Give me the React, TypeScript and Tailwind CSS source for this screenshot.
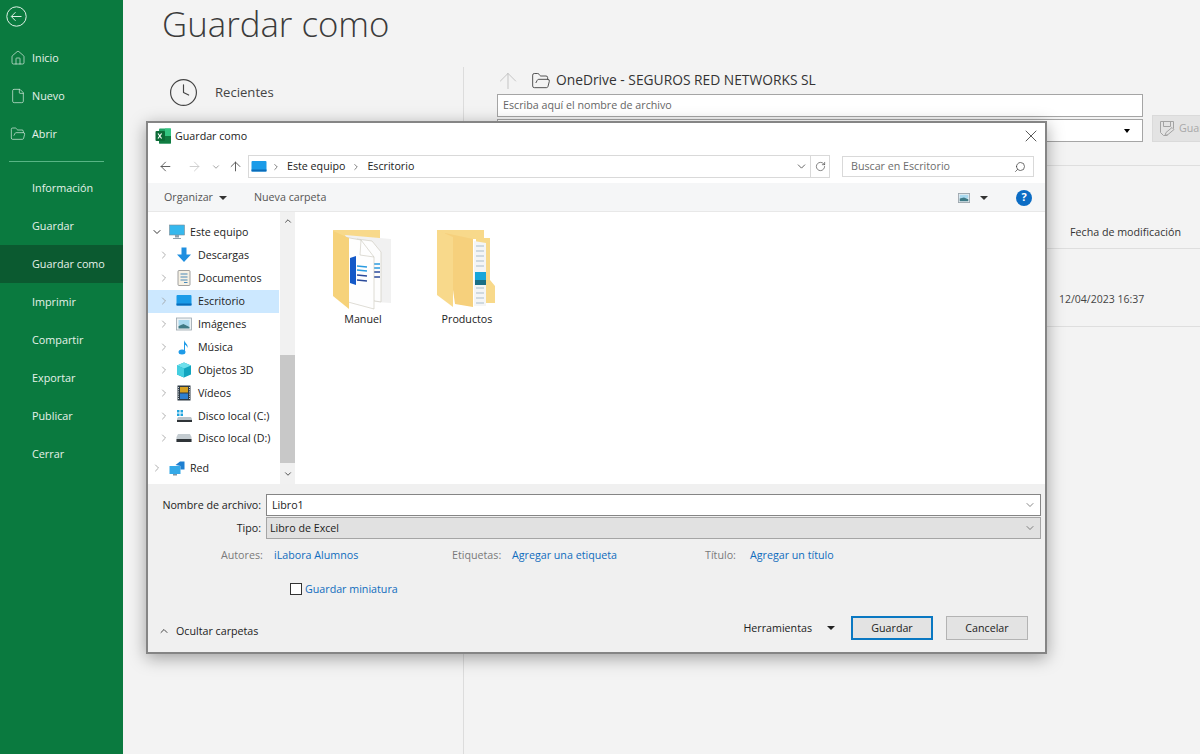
import React from "react";
import { House, File, FolderOpen, ArrowLeft, ArrowRight, ArrowUp, ChevronDown, ChevronRight, ChevronUp, RotateCw, Search, X, Clock } from "lucide-react";

const font = { fontFamily: '"Open Sans","Noto Sans",sans-serif' };

function NavItem({ label, active, icon }: { label: string; active?: boolean; icon?: React.ReactNode }) {
  return (
    <div className={`h-[38px] flex items-center text-[10.8px] text-[#e6f2ea] ${active ? "bg-[#0b5a30]" : ""}`}>
      <div className="w-8 flex justify-center pl-[3px] shrink-0">{icon}</div>
      <span>{label}</span>
    </div>
  );
}

function Sidebar() {
  return (
    <aside className="w-[123px] h-full bg-[#0a7a3f] shrink-0 flex flex-col">
      <div className="h-[39px] pl-[6px] pt-[6px]">
        <svg width="21" height="21" viewBox="0 0 21 21" fill="none" stroke="#dff1e6" strokeWidth="1"><circle cx="10.5" cy="10.5" r="9.7" /><path d="M15.5 10.5H5.5M9.5 6.2l-4.2 4.3 4.2 4.3" /></svg>
      </div>
      <NavItem label="Inicio" icon={<House size={16} strokeWidth={1} />} />
      <NavItem label="Nuevo" icon={<File size={16} strokeWidth={1} />} />
      <NavItem label="Abrir" icon={<FolderOpen size={16} strokeWidth={1} />} />
      <div className="mx-[9px] mt-[8px] mb-[7px] h-px bg-[#58b585] w-[95px]" />
      <NavItem label="Información" />
      <NavItem label="Guardar" />
      <NavItem label="Guardar como" active />
      <NavItem label="Imprimir" />
      <NavItem label="Compartir" />
      <NavItem label="Exportar" />
      <NavItem label="Publicar" />
      <NavItem label="Cerrar" />
    </aside>
  );
}

function Background() {
  return (
    <main className="flex-1 min-w-0 h-full bg-[#f3f3f3] overflow-hidden">
      <h1 className="pl-[39px] h-[67px] text-[34.8px] leading-[48px] font-light text-[#3b3b3b]">Guardar como</h1>
      <div className="flex h-[687px]">
        <div className="w-[340px] shrink-0 pl-[46px] pt-[10px]">
          <div className="flex items-center gap-[16px] text-[#444] text-[13.1px]">
            <Clock size={31} strokeWidth={0.9} className="-ml-[1px]" />
            <span>Recientes</span>
          </div>
        </div>
        <div className="flex-1 min-w-0 border-l border-[#dcdcdc] pl-[33px] overflow-hidden">
          <div className="h-[27px] flex items-center text-[#333] text-[13.8px]">
            <ArrowUp size={26} strokeWidth={0.8} className="text-[#bdbdbd] -ml-[2px] mr-[10px]" />
            <FolderOpen size={20} strokeWidth={1} className="mr-[5px]" />
            <span>OneDrive - SEGUROS RED NETWORKS SL</span>
          </div>
          <div className="w-[646px] h-[23px] bg-white border border-[#a5a5a5] text-[10.7px] text-[#666] pl-[5px] flex items-center">Escriba aquí el nombre de archivo</div>
          <div className="flex gap-[9px] mt-[2px] w-[760px] h-[23px] items-end">
            <div className="w-[646px] h-[23px] shrink-0 bg-white border border-[#a5a5a5] flex items-center justify-end pr-[12px]">
              <span className="w-0 h-0 border-x-[3.5px] border-x-transparent border-t-[4px] border-t-black" />
            </div>
            <div className="w-[100px] h-[27px] shrink-0 bg-[#e3e3e3] border border-[#dadada] flex items-center pl-[6px] gap-[3px] text-[10.7px] text-[#a8a8a8]">
              <svg width="17" height="17" viewBox="0 0 17 17" fill="none" stroke="#a3a3a3"><path d="M1.5 1.5h13v7M1.5 1.5v11l3 3h4M4.5 1.5v5h7v-5M6 15.5l1-3 6-5 2 2-6 5z" /></svg>
              <span>Guardar</span>
            </div>
          </div>
          <div className="mt-[23px] h-px bg-[#dedede] w-[760px]" />
          <div className="h-[82px] flex items-end pl-[573px] pb-[8px] text-[10.7px] text-[#333] whitespace-nowrap">
            <span>Fecha de modificación</span>
          </div>
          <div className="h-px bg-[#dedede] w-[760px]" />
          <div className="h-[77px] flex items-center pl-[562px] pt-[24px] text-[10.5px] text-[#444] whitespace-nowrap">
            <span>12/04/2023 16:37</span>
          </div>
          <div className="h-px bg-[#dedede] w-[760px]" />
        </div>
      </div>
    </main>
  );
}

function ExcelIcon() {
  return (
    <svg width="16" height="16" viewBox="0 0 16 16">
      <rect x="4" y="0.5" width="12" height="15" rx="1" fill="#21a366" />
      <rect x="10" y="0.5" width="6" height="7.5" fill="#33c481" />
      <rect x="4" y="8" width="12" height="7.5" fill="#107c41" />
      <rect x="0.5" y="3" width="9.5" height="10" rx="1" fill="#0c6b37" />
      <path d="M3 5.5l3.6 5M6.6 5.5l-3.6 5" stroke="#fff" strokeWidth="1.2" />
    </svg>
  );
}

const Caret = ({ c = "border-t-[#333]" }: { c?: string }) => (
  <span className={`inline-block w-0 h-0 border-x-[4px] border-x-transparent border-t-[4px] ${c}`} />
);

const MonitorBlue = () => (
  <svg width="16" height="14" viewBox="0 0 16 14"><rect x="0.5" y="1" width="15" height="10.5" rx="1" fill="#1a9be8" /><path d="M0.5 9.5h15v2h-15z" fill="#0a6bb8" /></svg>
);

const icons: Record<string, React.ReactNode> = {
  equipo: <svg width="16" height="16" viewBox="0 0 16 16"><rect x="0.5" y="1" width="15" height="10" fill="#35b8ee" stroke="#7c8a94" strokeWidth="0.6" /><path d="M6 11h4v2.5H6zM4 14h8v1H4z" fill="#8ea0ad" /></svg>,
  descargas: <svg width="16" height="16" viewBox="0 0 16 16"><path d="M5.5 0.5h5v7h4.5L8 15 1 7.5h4.5z" fill="#1f8fe0" /></svg>,
  documentos: <svg width="14" height="16" viewBox="0 0 14 16"><rect x="1" y="0.5" width="12" height="15" rx="1" fill="#f6f1e4" stroke="#8a8a8a" strokeWidth="0.8" /><path d="M3.5 4h7M3.5 7h7M3.5 10h7M7 12.5h3.5" stroke="#4a89b8" strokeWidth="1" /></svg>,
  escritorio: <MonitorBlue />,
  imagenes: <svg width="16" height="14" viewBox="0 0 16 14"><rect x="0.5" y="1" width="15" height="12" fill="#eef2f4" stroke="#9aa5ad" strokeWidth="0.8" /><path d="M2.5 3h11v7l-5-2.5-6 1z" fill="#a9d9ef" /><path d="M2.5 9l5-2 6 3v1.5h-11z" fill="#3e7a86" /></svg>,
  musica: <svg width="16" height="16" viewBox="0 0 16 16"><ellipse cx="6" cy="13" rx="3.5" ry="2.5" fill="#1e9be8" /><path d="M8 13V1c.6 3 4.5 4 3.5 8-.3-2-2-3-2.5-3.2V13z" fill="#1e9be8" /></svg>,
  objetos: <svg width="16" height="16" viewBox="0 0 16 16"><path d="M8 0.5l7 3v9l-7 3-7-3v-9z" fill="#12a5bf" /><path d="M1 3.5l7 3 7-3-7-3z" fill="#6fe0ec" /><path d="M1 3.5l7 3v9l-7-3z" fill="#45cfe0" /></svg>,
  videos: <svg width="14" height="16" viewBox="0 0 14 16"><rect x="0.5" y="0.5" width="13" height="15" fill="#2e3a44" /><rect x="3" y="2" width="8" height="5.5" fill="#d5a021" /><rect x="3" y="8.5" width="8" height="5.5" fill="#2e7fd0" /><path d="M1.5 2v12M12.5 2v12" stroke="#cfd6dc" strokeDasharray="1 1.2" /></svg>,
  c: <svg width="16" height="14" viewBox="0 0 16 14"><path d="M1 1h2.5v2.5H1zM4.5 1H7v2.5H4.5zM1 4.5h2.5V7H1zM4.5 4.5H7V7H4.5z" fill="#20a4dd" /><path d="M2 8h13l1 2v3H1v-3z" fill="#b9c2c8" /><rect x="1" y="11" width="15" height="2" fill="#2f3438" /></svg>,
  d: <svg width="16" height="10" viewBox="0 0 16 10"><path d="M2 1h12l1.5 3v5H0.5V4z" fill="#c4ccd1" /><rect x="0.5" y="6" width="15" height="3" fill="#2f3438" /></svg>,
  red: <svg width="16" height="15" viewBox="0 0 16 15"><rect x="0.5" y="5" width="11" height="8" fill="#34a9e8" /><path d="M4 13h4v1.5H4z" fill="#7d93a3" /><path d="M6.5 4L11 .5h4.5v8h-4V5z" fill="#1d7fd1" /></svg>,
};

function TreeRow({ label, icon, sel, top, open, mt }: { label: string; icon: string; sel?: boolean; top?: boolean; open?: boolean; mt?: string }) {
  return (
    <div className={`h-[22.9px] flex items-center text-[10.7px] text-[#222] ${sel ? "bg-[#cce8ff]" : ""} ${mt ?? ""}`}>
      <div className={`flex items-center shrink-0 ${top ? "pl-[3px]" : "pl-[10px]"}`}>
        {open ? <ChevronDown size={12} strokeWidth={2} className="text-[#333]" /> : <ChevronRight size={12} strokeWidth={1.6} className="text-[#999]" />}
      </div>
      <div className={`flex justify-center shrink-0 ${top ? "w-[27px]" : "w-[28px]"}`}>{icons[icon]}</div>
      <span className="whitespace-nowrap">{label}</span>
    </div>
  );
}

function FolderManuel() {
  return (
    <svg width="60" height="80" viewBox="0 0 60 80">
      <path d="M0 0h47v9H0z" fill="#f8d98b" />
      <path d="M12 5l46 4v64l-16-1z" fill="#f1f1f1" />
      <path d="M24 9l15 2 9 11v50l-24-4z" fill="#fdfdfd" stroke="#c9c6bb" strokeWidth="0.6" />
      <path d="M41 34h6M41 38h6" stroke="#2b9be0" strokeWidth="1.3" />
      <path d="M41 42h6M41 47h6" stroke="#2a4a9a" strokeWidth="1.3" />
      <path d="M11 7l17 3 13 17v52l-26-7z" fill="#fefefe" stroke="#c9c6bb" strokeWidth="0.6" />
      <path d="M28 10l-1 15 14 2" fill="none" stroke="#c9c6bb" strokeWidth="0.6" />
      <path d="M17 28l6-2v29l-6-2z" fill="#1459c8" />
      <path d="M24 36l10 1M24 40l10 1" stroke="#2b9be0" strokeWidth="1.3" />
      <path d="M24 45l10 1M24 50l10 1" stroke="#2a4a9a" strokeWidth="1.3" />
      <path d="M0 1l16 7v71L0 66z" fill="#f6d27a" />
    </svg>
  );
}

function FolderProductos() {
  return (
    <svg width="60" height="80" viewBox="0 0 60 80">
      <path d="M0 0h47v9H0z" fill="#f8d98b" />
      <path d="M39 8h14v42l5 6v17H39z" fill="#f8d98a" />
      <path d="M37 11l12 2v63H37z" fill="#f4f5f6" />
      <path d="M39 16h8M39 21h8M39 26h8M39 31h8M39 36h8M39 58h8M39 63h8M39 68h8M39 73h8" stroke="#a9bdca" strokeWidth="1.2" />
      <rect x="38" y="42" width="11" height="8" fill="#17a6da" />
      <rect x="38" y="50" width="11" height="5" fill="#1b6f86" />
      <path d="M8 3l28 6v68l-18-3z" fill="#f6d07c" />
      <path d="M0 0l16 7v70L0 65z" fill="#f8d98b" />
    </svg>
  );
}

function Dialog() {
  return (
    <section className="absolute left-[146px] top-[121px] w-[901px] h-[533px] border-2 border-[#858585] bg-white shadow-[0_4px_16px_rgba(0,0,0,0.35)] flex flex-col text-[10.7px] text-[#222]" style={font}>
      <div className="h-[26px] shrink-0 flex items-center pl-[7px] pr-[4px] gap-[4px] text-[#222]">
        <ExcelIcon />
        <span>Guardar como</span>
        <X size={20} strokeWidth={0.9} className="ml-auto" />
      </div>
      <div className="h-[33px] pt-[2px] shrink-0 flex items-center pl-[10px]">
        <ArrowLeft size={15} strokeWidth={1.5} className="text-[#555]" />
        <ArrowRight size={15} strokeWidth={1.5} className="text-[#ccc] ml-[14px]" />
        <ChevronDown size={10} strokeWidth={1.6} className="text-[#777] ml-[9px]" />
        <ArrowUp size={15} strokeWidth={1.5} className="text-[#555] ml-[7px]" />
        <div className="ml-[5px] w-[582px] h-[23px] shrink-0 border border-[#d9d9d9] flex items-center pl-[2px]">
          <MonitorBlue />
          <ChevronRight size={10} className="ml-[4px] mr-[6px] text-[#666]" />
          <span>Este equipo</span>
          <ChevronRight size={10} className="mx-[6px] text-[#666]" />
          <span>Escritorio</span>
          <ChevronDown size={13} strokeWidth={1.5} className="ml-auto mr-[2px] text-[#444]" />
          <div className="w-[19px] h-full border-l border-[#d9d9d9] flex items-center justify-center">
            <RotateCw size={11} strokeWidth={1.4} className="text-[#444]" />
          </div>
        </div>
        <div className="ml-[12px] w-[192px] h-[21px] shrink-0 border border-[#d9d9d9] flex items-center pl-[8px] pr-[7px] text-[#6d6d6d]">
          <span>Buscar en Escritorio</span>
          <Search size={12} strokeWidth={1.5} className="ml-auto -scale-x-100 text-[#444]" />
        </div>
      </div>
      <div className="mt-[1px] h-[29px] pt-[1px] shrink-0 bg-[#f5f6f7] border-b border-[#e8e8e8] flex items-center pl-[16px] pr-[13px] text-[#555]">
        <span>Organizar</span>
        <span className="ml-[6px] flex"><Caret /></span>
        <span className="ml-[27px]">Nueva carpeta</span>
        <svg width="12" height="10" viewBox="0 0 14 11" className="ml-auto" preserveAspectRatio="none"><rect x="0.5" y="0.5" width="13" height="10" fill="#e6edf0" stroke="#9aa5ad" /><path d="M2 2h10v4H2z" fill="#a9d9ef" /><path d="M2 6l5-1 5 2v2H2z" fill="#3e7a86" /></svg>
        <span className="ml-[10px] mr-[28px] flex"><Caret /></span>
        <span className="w-4 h-4 rounded-full bg-[#0b6cc4] text-white text-[11px] font-bold flex items-center justify-center">?</span>
      </div>
      <div className="flex-1 min-h-0 flex">
        <div className="w-[131px] pt-[9px] shrink-0 flex flex-col">
          <TreeRow label="Este equipo" icon="equipo" open top />
          <TreeRow label="Descargas" icon="descargas" />
          <TreeRow label="Documentos" icon="documentos" />
          <TreeRow label="Escritorio" icon="escritorio" sel />
          <TreeRow label="Imágenes" icon="imagenes" />
          <TreeRow label="Música" icon="musica" />
          <TreeRow label="Objetos 3D" icon="objetos" />
          <TreeRow label="Vídeos" icon="videos" />
          <TreeRow label="Disco local (C:)" icon="c" />
          <TreeRow label="Disco local (D:)" icon="d" />
          <TreeRow label="Red" icon="red" top mt="mt-[7px]" />
        </div>
        <div className="w-[15px] shrink-0 bg-[#f1f1f1] flex flex-col ml-[1px]">
          <div className="h-[18px] flex items-center justify-center"><ChevronUp size={10} strokeWidth={2.4} className="text-[#555]" /></div>
          <div className="h-[125px]" />
          <div className="h-[108px] bg-[#c8c8c8]" />
          <div className="flex-1 flex items-center justify-center"><ChevronDown size={10} strokeWidth={2.4} className="text-[#555]" /></div>
        </div>
        <div className="flex-1 bg-white flex items-start pt-[18px] pl-[38px] gap-[44px]">
          <div className="w-[60px] flex flex-col items-center">
            <FolderManuel />
            <span className="mt-[1px] whitespace-nowrap">Manuel</span>
          </div>
          <div className="w-[60px] flex flex-col items-center">
            <FolderProductos />
            <span className="mt-[1px] whitespace-nowrap">Productos</span>
          </div>
        </div>
      </div>
      <div className="h-[168px] shrink-0 bg-[#f0f0f0] flex flex-col">
        <div className="pt-[10px] pl-[13px] pr-[4px] flex flex-col gap-[1px]">
          <div className="flex items-center gap-[5px]">
            <span className="w-[100px] text-right whitespace-nowrap">Nombre de archivo:</span>
            <div className="flex-1 h-[22px] bg-white border border-[#858585] flex items-center pl-[5px] pr-[4px]">
              <span>Libro1</span><ChevronDown size={12} strokeWidth={1.4} className="ml-auto text-[#555]" />
            </div>
          </div>
          <div className="flex items-center gap-[5px]">
            <span className="w-[100px] text-right">Tipo:</span>
            <div className="flex-1 h-[22px] bg-[#e1e1e1] border border-[#a5a5a5] flex items-center pl-[3px] pr-[4px]">
              <span>Libro de Excel</span><ChevronDown size={12} strokeWidth={1.4} className="ml-auto text-[#555]" />
            </div>
          </div>
        </div>
        <div className="mt-[7px] pl-[73px] flex items-center h-[18px] text-[#7a7a7a] whitespace-nowrap">
          <span className="w-[53px]">Autores:</span>
          <span className="w-[178px] text-[#0f6cbd]">iLabora Alumnos</span>
          <span className="w-[60px]">Etiquetas:</span>
          <span className="w-[193px] text-[#0f6cbd]">Agregar una etiqueta</span>
          <span className="w-[45px]">Título:</span>
          <span className="text-[#0f6cbd]">Agregar un título</span>
        </div>
        <div className="mt-[16px] flex items-center pl-[142px] gap-[3px] h-[18px] text-[#0f6cbd]">
          <span className="w-[12px] h-[12px] bg-white border border-[#333]" />
          <span>Guardar miniatura</span>
        </div>
        <div className="mt-[18px] flex items-center pl-[10px] pr-[17px]">
          <ChevronUp size={12} strokeWidth={1.8} className="text-[#333] translate-y-[3px]" />
          <span className="ml-[6px] translate-y-[3px]">Ocultar carpetas</span>
          <span className="ml-auto">Herramientas</span>
          <span className="ml-[15px] flex"><Caret c="border-t-[#222]" /></span>
          <div className="ml-[16px] w-[82px] h-[24px] border-2 border-[#0a78c2] bg-[#e3e3e3] flex items-center justify-center">Guardar</div>
          <div className="ml-[13px] w-[82px] h-[24px] border border-[#b3b3b3] bg-[#e3e3e3] flex items-center justify-center">Cancelar</div>
        </div>
      </div>
    </section>
  );
}

export default function App() {
  return (
    <div className="relative w-[1200px] h-[754px] overflow-hidden flex" style={font}>
      <Sidebar />
      <Background />
      <Dialog />
    </div>
  );
}
